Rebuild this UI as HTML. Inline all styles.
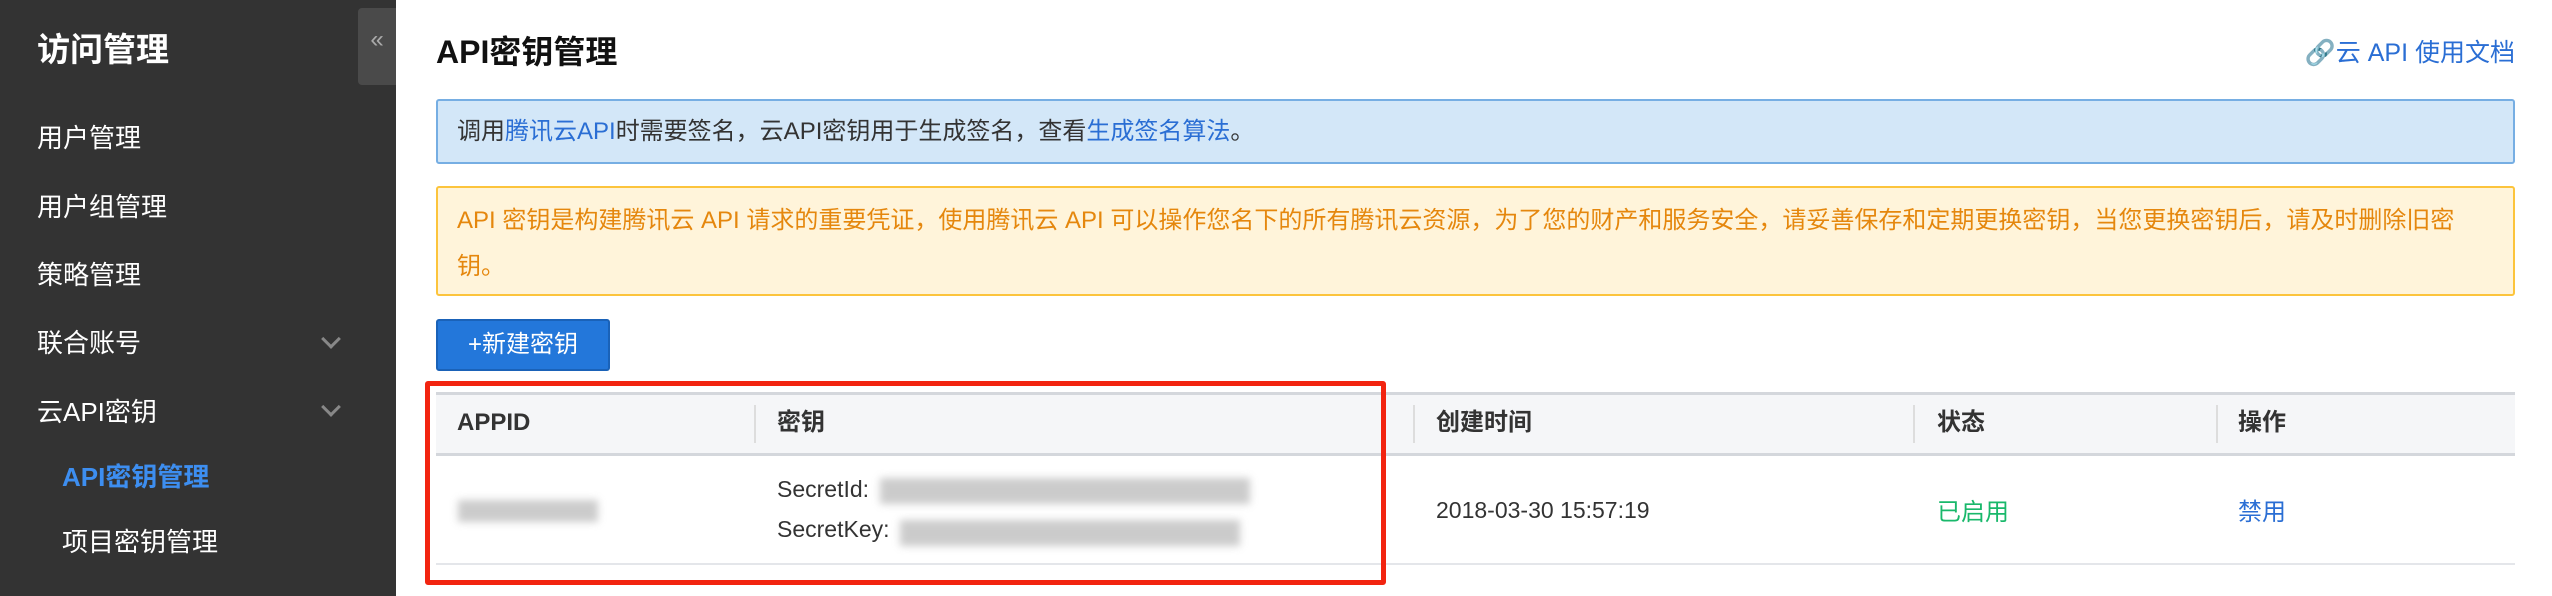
<!DOCTYPE html>
<html><head><meta charset="utf-8"><style>
*{margin:0;padding:0;box-sizing:border-box}
body{width:2552px;height:596px;overflow:hidden;background:#fff;font-family:"Liberation Sans","Noto Sans CJK SC",sans-serif;position:relative}
.abs{position:absolute;white-space:nowrap}
.side{position:absolute;left:0;top:0;width:396px;height:596px;background:#333}
.mi{position:absolute;left:37px;color:#fff;font-size:26px;line-height:30px}
.chev{position:absolute;left:324px;width:14px;height:14px;border-right:3px solid #888;border-bottom:3px solid #888;transform:rotate(45deg)}
.th{position:absolute;top:408px;font-size:24px;font-weight:bold;color:#333;line-height:30px}
.dv{position:absolute;top:405px;width:2px;height:38px;background:#ddd}
.blur{position:absolute;background:#aaa;filter:blur(4px);opacity:.6}
</style></head><body>
<div class="side">
<div class="abs" style="left:37px;top:23px;font-size:33px;font-weight:bold;color:#fff">访问管理</div>
<div class="abs" style="left:358px;top:8px;width:38px;height:77px;background:#4a4a4a;border-radius:4px 0 0 4px;color:#aaa;font-size:24px;text-align:center;line-height:64px">«</div>
<div class="mi" style="top:123px">用户管理</div>
<div class="mi" style="top:192px">用户组管理</div>
<div class="mi" style="top:260px">策略管理</div>
<div class="mi" style="top:328px">联合账号</div><div class="chev" style="top:332px"></div>
<div class="mi" style="top:397px">云API密钥</div><div class="chev" style="top:400px"></div>
<div class="mi" style="top:462px;left:62px;color:#3d8ef0;font-weight:bold">API密钥管理</div>
<div class="mi" style="top:527px;left:62px">项目密钥管理</div>
</div>
<div class="abs" style="left:436px;top:27px;font-size:32px;font-weight:bold;color:#111">API密钥管理</div>
<div class="abs" style="right:37px;top:33px;font-size:25px;color:#2a6ed4">🔗云 API 使用文档</div>
<div class="abs" style="left:436px;top:99px;width:2079px;height:65px;background:#d3e7f8;border:2px solid #76aee3;border-radius:3px;padding-left:19px;line-height:61px;font-size:24px;color:#333">调用<span style="color:#2a6ed4">腾讯云API</span>时需要签名，云API密钥用于生成签名，查看<span style="color:#2a6ed4">生成签名算法</span>。</div>
<div class="abs" style="left:436px;top:186px;width:2079px;height:110px;background:#fff4da;border:2px solid #fcc43c;border-radius:3px;padding:10px 19px;line-height:46px;font-size:24px;color:#e5870d;white-space:normal">API 密钥是构建腾讯云 API 请求的重要凭证，使用腾讯云 API 可以操作您名下的所有腾讯云资源，为了您的财产和服务安全，请妥善保存和定期更换密钥，当您更换密钥后，请及时删除旧密钥。</div>
<div class="abs" style="left:436px;top:319px;width:174px;height:52px;background:#2377da;border:2px solid #1a62b8;border-radius:3px;color:#fff;font-size:24px;text-align:center;line-height:48px">+新建密钥</div>
<div class="abs" style="left:436px;top:392px;width:2079px;height:64px;background:#f5f6f8;border-top:3px solid #d4d7dc;border-bottom:3px solid #d4d7dc"></div>
<div class="th" style="left:457px">APPID</div>
<div class="th" style="left:777px">密钥</div>
<div class="th" style="left:1436px">创建时间</div>
<div class="th" style="left:1937px">状态</div>
<div class="th" style="left:2238px">操作</div>
<div class="dv" style="left:754px"></div><div class="dv" style="left:1413px"></div><div class="dv" style="left:1913px"></div><div class="dv" style="left:2216px"></div>
<div class="abs" style="left:436px;top:563px;width:2079px;height:2px;background:#e4e6ea"></div>
<div class="blur" style="left:458px;top:500px;width:140px;height:22px"></div>
<div class="abs" style="left:777px;top:476px;font-size:23px;color:#333">SecretId:</div>
<div class="blur" style="left:880px;top:478px;width:370px;height:26px"></div>
<div class="abs" style="left:777px;top:516px;font-size:23px;color:#333">SecretKey:</div>
<div class="blur" style="left:900px;top:520px;width:340px;height:26px"></div>
<div class="abs" style="left:1436px;top:497px;font-size:23px;color:#333">2018-03-30 15:57:19</div>
<div class="abs" style="left:1937px;top:492px;font-size:24px;color:#19b86b">已启用</div>
<div class="abs" style="left:2238px;top:492px;font-size:24px;color:#2a6ed4">禁用</div>
<div class="abs" style="left:425px;top:381px;width:961px;height:204px;border:5px solid #f22410;border-radius:3px"></div>
</body></html>
